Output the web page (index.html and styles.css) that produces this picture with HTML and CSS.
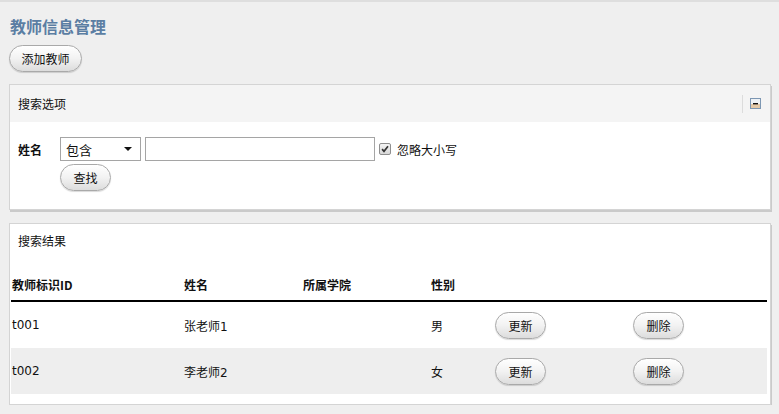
FILE: index.html
```html
<!DOCTYPE html>
<html>
<head>
    <title>教师信息管理</title>
    <link rel="stylesheet" href="styles.css">
</head>
<body>
    <div class="page">
        <h1 class="page-title">教师信息管理</h1>
        <button class="pill-button add-button">添加教师</button>

        <!-- Search options -->
        <div class="panel search-panel">
            <div class="panel-header">
                <span class="panel-title">搜索选项</span>
                <span class="panel-tools">
                    <span class="tool-sep"></span>
                    <svg class="collapse-icon" viewBox="0 0 11 11" xmlns="http://www.w3.org/2000/svg">
                        <rect x="0.5" y="0.5" width="10" height="10" fill="#eef2f6" stroke="#7d97b3"/>
                        <rect x="1" y="6" width="9" height="4" fill="#e3c9a8"/>
                        <rect x="3" y="5" width="5" height="1.4" fill="#111"/>
                    </svg>
                </span>
            </div>
            <div class="panel-body">
                <div class="search-row">
                    <label class="field-label">姓名</label>
                    <div class="fake-select">
                        <span>包含</span>
                        <span class="select-arrow"></span>
                    </div>
                    <input class="text-input" type="text">
                    <span class="check-box">
                        <svg viewBox="0 0 12 12" xmlns="http://www.w3.org/2000/svg">
                            <path d="M2.5 6.2l2.3 2.6 4.8-6" fill="none" stroke="#333" stroke-width="2"/>
                        </svg>
                    </span>
                    <span class="check-label">忽略大小写</span>
                </div>
                <div class="search-actions">
                    <button class="pill-button">查找</button>
                </div>
            </div>
        </div>

        <!-- Results -->
        <div class="panel result-panel">
            <div class="result-title">搜索结果</div>
            <table class="result-table">
                <thead>
                    <tr>
                        <th class="col-id">教师标识ID</th>
                        <th class="col-name">姓名</th>
                        <th class="col-college">所属学院</th>
                        <th class="col-sex">性别</th>
                        <th class="col-update"></th>
                        <th class="col-delete"></th>
                    </tr>
                </thead>
                <tbody>
                    <tr>
                        <td>t001</td>
                        <td>张老师1</td>
                        <td></td>
                        <td>男</td>
                        <td><button class="pill-button row-button">更新</button></td>
                        <td><button class="pill-button row-button">删除</button></td>
                    </tr>
                    <tr class="alt">
                        <td>t002</td>
                        <td>李老师2</td>
                        <td></td>
                        <td>女</td>
                        <td><button class="pill-button row-button">更新</button></td>
                        <td><button class="pill-button row-button">删除</button></td>
                    </tr>
                </tbody>
            </table>
        </div>
    </div>
</body>
</html>
```

FILE: styles.css
```css
body {
    margin: 0;
    padding: 0;
    background: #efefef;
    border-top: 2px solid #dedede;
    font-family: Verdana, 'DejaVu Sans', 'Noto Sans CJK SC', sans-serif;
    font-size: 12px;
    color: #111;
}
.page {
    padding: 0 8px 0 9px;
}
.page-title {
    margin: 0;
    padding: 14px 0 0 1px;
    height: 29px;
    font-family: 'Noto Sans CJK SC', sans-serif;
    font-size: 16px;
    font-weight: bold;
    line-height: 20px;
    color: #5b7ea3;
}
.pill-button {
    background: linear-gradient(#ffffff, #f2f2f2 50%, #dcdcdc);
    border: 1px solid #a9a9a9;
    border-radius: 14px;
    height: 27px;
    padding: 0 12px;
    font-family: 'Noto Sans CJK SC', sans-serif;
    font-size: 12px;
    color: #111;
    white-space: nowrap;
    box-shadow: 0 1px 1px rgba(0,0,0,0.15);
    cursor: pointer;
}
.add-button {
    width: 73px;
    padding: 0;
    margin-bottom: 12px;
}
/* Panels */
.panel {
    background: #fff;
    border: 1px solid #d4d4d4;
    box-shadow: 1px 2px 0 #cacaca;
    width: 760px;
}
.panel-header {
    display: flex;
    align-items: center;
    justify-content: space-between;
    height: 37px;
    padding: 0 9px 0 8px;
    background: #f4f4f4;
}
.panel-title {
    font-family: 'Noto Sans CJK SC', sans-serif;
}
.panel-tools {
    display: flex;
    align-items: center;
}
.tool-sep {
    width: 1px;
    height: 18px;
    background: #dcdcdc;
    margin-right: 7px;
}
.collapse-icon {
    width: 11px;
    height: 11px;
}
.panel-body {
    padding: 15px 8px 18px 8px;
}
.search-row {
    display: flex;
    align-items: center;
    height: 24px;
}
.field-label {
    width: 42px;
    font-family: 'Noto Sans CJK SC', sans-serif;
    font-weight: bold;
}
.fake-select {
    display: flex;
    align-items: center;
    justify-content: space-between;
    box-sizing: border-box;
    width: 81px;
    height: 24px;
    padding: 0 8px 0 5px;
    border: 1px solid #a5a5a5;
    background: #fff;
    font-family: 'Noto Sans CJK SC', sans-serif;
    font-size: 13px;
}
.select-arrow {
    width: 0;
    height: 0;
    border-left: 4px solid transparent;
    border-right: 4px solid transparent;
    border-top: 4px solid #111;
}
.text-input {
    box-sizing: border-box;
    width: 230px;
    height: 24px;
    margin: 0 0 0 4px;
    border: 1px solid #a5a5a5;
    padding: 0 4px;
}
.check-box {
    display: flex;
    box-sizing: border-box;
    width: 12px;
    height: 12px;
    margin: 0 6px 0 4px;
    border: 1px solid #8f8f8f;
    border-radius: 2px;
    background: linear-gradient(#f4f4f4, #d8d8d8);
}
.check-box svg {
    width: 10px;
    height: 10px;
}
.check-label {
    font-family: 'Noto Sans CJK SC', sans-serif;
}
.search-actions {
    padding: 3px 0 0 42px;
}
.search-actions .pill-button {
    width: 51px;
    padding: 0;
}
/* Results */
.result-panel {
    margin-top: 13px;
    padding: 0 3px 10px 1px;
    width: 756px;
}
.result-title {
    padding: 8px 8px 0 7px;
    height: 26px;
    line-height: 18px;
    font-family: 'Noto Sans CJK SC', sans-serif;
}
.result-table {
    width: 100%;
    border-collapse: collapse;
}
.result-table th {
    height: 35px;
    padding: 0 0 7px 1px;
    text-align: left;
    vertical-align: bottom;
    border-bottom: 2px solid #000;
    font-family: 'Noto Sans CJK SC', sans-serif;
    font-weight: bold;
}
.result-table td {
    height: 46px;
    padding: 0 0 0 1px;
    vertical-align: middle;
}
.result-table tr.alt td {
    background: #eeeeee;
}
.col-id { width: 171px; }
.col-name { width: 118px; }
.col-college { width: 127px; }
.col-sex { width: 63px; }
.col-update { width: 137px; }
.row-button {
    width: 51px;
    padding: 0;
}
```
